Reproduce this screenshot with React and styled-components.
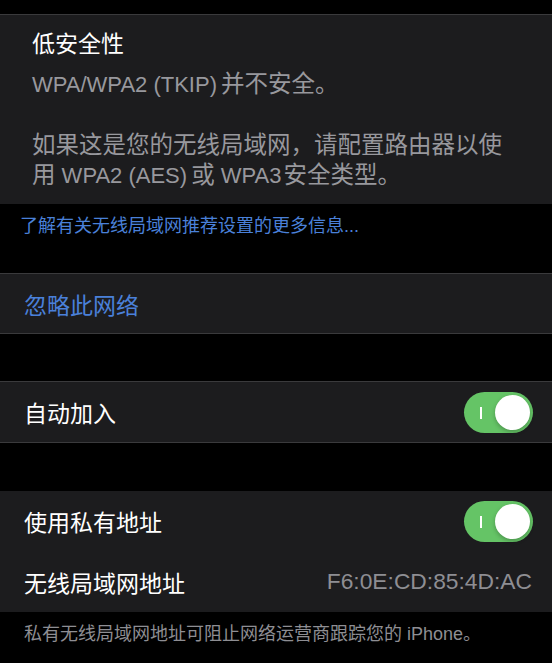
import React from "react";
import styled, { createGlobalStyle } from "styled-components";

const Global = createGlobalStyle`
  html, body { margin: 0; padding: 0; background: #000; }
  body {
    font-family: "Liberation Sans", "Noto Sans CJK SC", sans-serif;
    -webkit-font-smoothing: antialiased;
  }
`;

const Page = styled.div`
  width: 552px;
  height: 663px;
  background: #000;
  overflow: hidden;
  padding-top: 14px;
  box-sizing: border-box;
`;

const InfoCard = styled.div`
  background: #1c1c1e;
  border-top: 1px solid #3a3a3c;
  padding: 14px 32px 13px 32px;
`;

const InfoTitle = styled.div`
  color: #fff;
  font-size: 23px;
  line-height: 30px;
  margin-bottom: 10px;
`;

const InfoText = styled.div`
  color: #98989d;
  font-size: 23.5px;
  line-height: 30px;
  white-space: pre-line;
`;

const Latin = styled.span`
  font-size: 22px;
  margin-right: ${(p) => p.$gap || 0}px;
`;

const LinkArea = styled.div`
  height: 69px;
  padding: 11px 20px 0;
  box-sizing: border-box;
`;

const LinkText = styled.span`
  color: #4a80d9;
  font-size: 18px;
  line-height: 22px;
`;

const Group = styled.div`
  background: #1c1c1e;
  border-top: ${(p) => (p.$top ? "1px solid #3a3a3c" : "none")};
  border-bottom: ${(p) => (p.$bottom ? "1px solid #3a3a3c" : "none")};
  margin-bottom: ${(p) => p.$gap || 0}px;
`;

const Row = styled.div`
  display: flex;
  align-items: center;
  justify-content: space-between;
  height: ${(p) => p.$h || 60}px;
  padding: 0 19px 0 24px;
`;

const Label = styled.span`
  color: ${(p) => (p.$blue ? "#4a80d9" : "#fff")};
  font-size: 23px;
`;

const Value = styled.span`
  color: #8e8e93;
  font-size: 22.8px;
  padding-right: 1px;
`;

const Switch = styled.div`
  position: relative;
  width: 69px;
  height: 41px;
  border-radius: 21px;
  background: #65c466;
  flex-shrink: 0;
`;

const OnMark = styled.span`
  position: absolute;
  left: 16px;
  top: 15px;
  width: 1.5px;
  height: 12px;
  background: #fff;
`;

const Knob = styled.span`
  position: absolute;
  right: 3px;
  top: 3px;
  width: 35px;
  height: 35px;
  border-radius: 50%;
  background: #fff;
  box-shadow: 0 2px 4px rgba(0, 0, 0, 0.25);
`;

const Footer = styled.div`
  color: #8e8e93;
  font-size: 18px;
  line-height: 24px;
  padding: 10px 24px 0;
`;

const Toggle = () => (
  <Switch>
    <OnMark />
    <Knob />
  </Switch>
);

export default function App() {
  return (
    <Page>
      <Global />
      <InfoCard>
        <InfoTitle>低安全性</InfoTitle>
        <InfoText>
          <Latin $gap={4}>WPA/WPA2 (TKIP)</Latin>并不安全。
          {"\n\n"}如果这是您的无线局域网，请配置路由器以使{"\n"}用
          <Latin $gap={4}> WPA2 (AES)</Latin>或<Latin $gap={2}> WPA3</Latin>
          安全类型。
        </InfoText>
      </InfoCard>
      <LinkArea>
        <LinkText>了解有关无线局域网推荐设置的更多信息...</LinkText>
      </LinkArea>
      <Group $top $bottom $gap={47}>
        <Row $h={59}>
          <Label $blue>忽略此网络</Label>
        </Row>
      </Group>
      <Group $top $bottom $gap={48}>
        <Row $h={60}>
          <Label>自动加入</Label>
          <Toggle />
        </Row>
      </Group>
      <Group>
        <Row $h={60}>
          <Label>使用私有地址</Label>
          <Toggle />
        </Row>
        <Row $h={61}>
          <Label>无线局域网地址</Label>
          <Value>F6:0E:CD:85:4D:AC</Value>
        </Row>
      </Group>
      <Footer>私有无线局域网地址可阻止网络运营商跟踪您的 iPhone。</Footer>
    </Page>
  );
}
